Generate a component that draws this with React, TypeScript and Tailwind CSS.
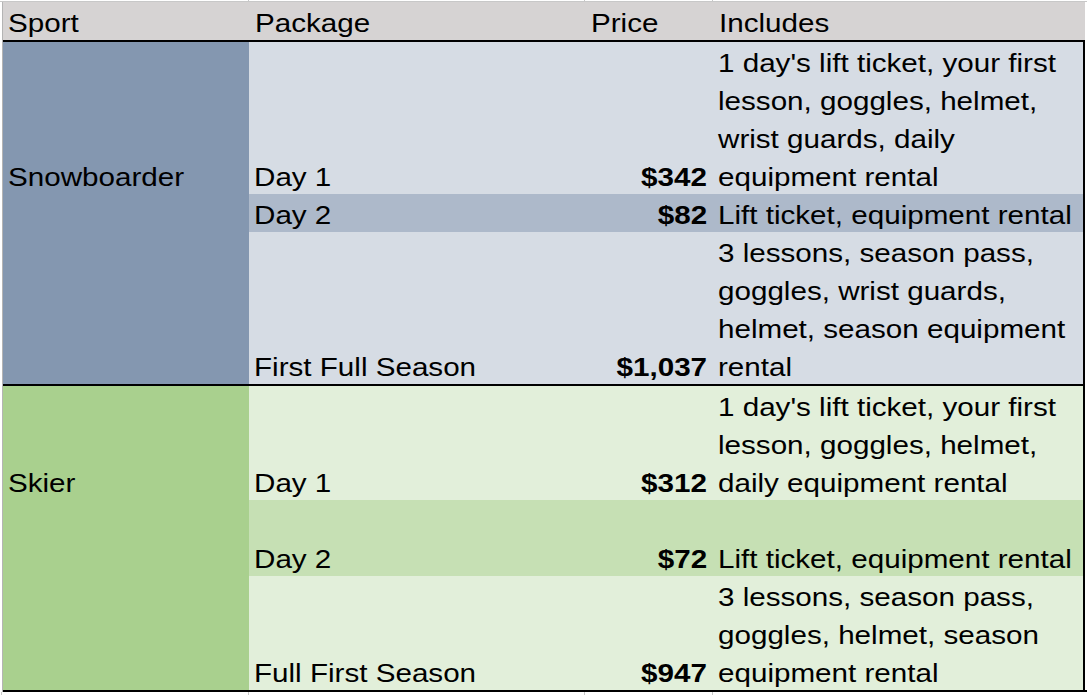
import React from "react";

const font = { fontFamily: '"Liberation Sans", Arial, sans-serif' };

function Line({ children, right, bold }: { children: React.ReactNode; right?: boolean; bold?: boolean }) {
  return (
    <div className={`h-[38px] leading-[38px] whitespace-nowrap ${right ? "text-right" : ""}`}>
      <span
        className={`inline-block translate-y-[1.5px] scale-x-[1.117] ${right ? "origin-right" : "origin-left"} ${bold ? "font-bold" : ""}`}
      >
        {children}
      </span>
    </div>
  );
}

function Cell({
  lines,
  className,
  right,
  bold,
}: {
  lines: string[];
  className: string;
  right?: boolean;
  bold?: boolean;
}) {
  return (
    <div className={`flex flex-col justify-end ${right ? "pr-[6px]" : "pl-[5px]"} ${className}`}>
      {lines.map((l, i) => (
        <Line key={i} right={right} bold={bold}>
          {l}
        </Line>
      ))}
    </div>
  );
}

type Row = { pkg: string; price: string; inc: string[]; h: string; bg: string };

function Group({ sport, sportBg, rows }: { sport: string; sportBg: string; rows: Row[] }) {
  return (
    <div className="flex">
      <div className={`w-[247px] flex flex-col ${sportBg}`}>
        <Cell lines={[sport]} className={rows[0].h} />
      </div>
      <div className="flex flex-col">
        {rows.map((r, i) => (
          <div key={i} className={`flex ${r.h} ${r.bg}`}>
            <Cell lines={[r.pkg]} className="w-[336px]" />
            <Cell lines={[r.price]} right bold className="w-[128px]" />
            <Cell lines={r.inc} className="w-[370px]" />
          </div>
        ))}
      </div>
    </div>
  );
}

export default function App() {
  return (
    <div className="w-[1087px] h-[695px] bg-white text-black text-[26.5px] overflow-hidden" style={font}>
      {/* top gridline strip */}
      <div className="h-[2px] flex border-b border-[#c8c8c8]">
        <div className="w-[249px] border-r border-[#c8c8c8]" />
        <div className="w-[336px] border-r border-[#c8c8c8]" />
        <div className="w-[128px] border-r border-[#c8c8c8]" />
        <div className="flex-1" />
      </div>
      <div className="ml-[2px] w-[1083px] border-l border-[#b4b4b4]">
        {/* header */}
        <div className="flex h-[38px] bg-[#d6d3d3]">
          <Cell lines={["Sport"]} className="w-[247px]" />
          <Cell lines={["Package"]} className="w-[336px]" />
          <Cell lines={["Price"]} className="w-[128px]" />
          <Cell lines={["Includes"]} className="w-[370px]" />
        </div>
        <div className="h-[2px] bg-black" />
        <div className="border-r-2 border-black">
          <Group
            sport="Snowboarder"
            sportBg="bg-[#8497b0]"
            rows={[
              {
                pkg: "Day 1",
                price: "$342",
                inc: ["1 day's lift ticket, your first", "lesson, goggles, helmet,", "wrist guards, daily", "equipment rental"],
                h: "h-[152px]",
                bg: "bg-[#d6dce4]",
              },
              {
                pkg: "Day 2",
                price: "$82",
                inc: ["Lift ticket, equipment rental"],
                h: "h-[38px]",
                bg: "bg-[#adb9ca]",
              },
              {
                pkg: "First Full Season",
                price: "$1,037",
                inc: ["3 lessons, season pass,", "goggles, wrist guards,", "helmet, season equipment", "rental"],
                h: "h-[152px]",
                bg: "bg-[#d6dce4]",
              },
            ]}
          />
          <div className="h-[2px] bg-black" />
          <Group
            sport="Skier"
            sportBg="bg-[#a9d08e]"
            rows={[
              {
                pkg: "Day 1",
                price: "$312",
                inc: ["1 day's lift ticket, your first", "lesson, goggles, helmet,", "daily equipment rental"],
                h: "h-[114px]",
                bg: "bg-[#e2efda]",
              },
              {
                pkg: "Day 2",
                price: "$72",
                inc: ["Lift ticket, equipment rental"],
                h: "h-[76px]",
                bg: "bg-[#c6e0b4]",
              },
              {
                pkg: "Full First Season",
                price: "$947",
                inc: ["3 lessons, season pass,", "goggles, helmet, season", "equipment rental"],
                h: "h-[114px]",
                bg: "bg-[#e2efda]",
              },
            ]}
          />
        </div>
        <div className="h-[2px] bg-black -mr-[2px]" />
      </div>
      {/* bottom gridline strip */}
      <div className="flex h-[10px]">
        <div className="w-[2px] border-r border-[#c8c8c8]" />
        <div className="w-[247px] border-r border-[#c8c8c8]" />
        <div className="w-[336px] border-r border-[#c8c8c8]" />
        <div className="w-[128px] border-r border-[#c8c8c8]" />
        <div className="flex-1" />
      </div>
    </div>
  );
}
